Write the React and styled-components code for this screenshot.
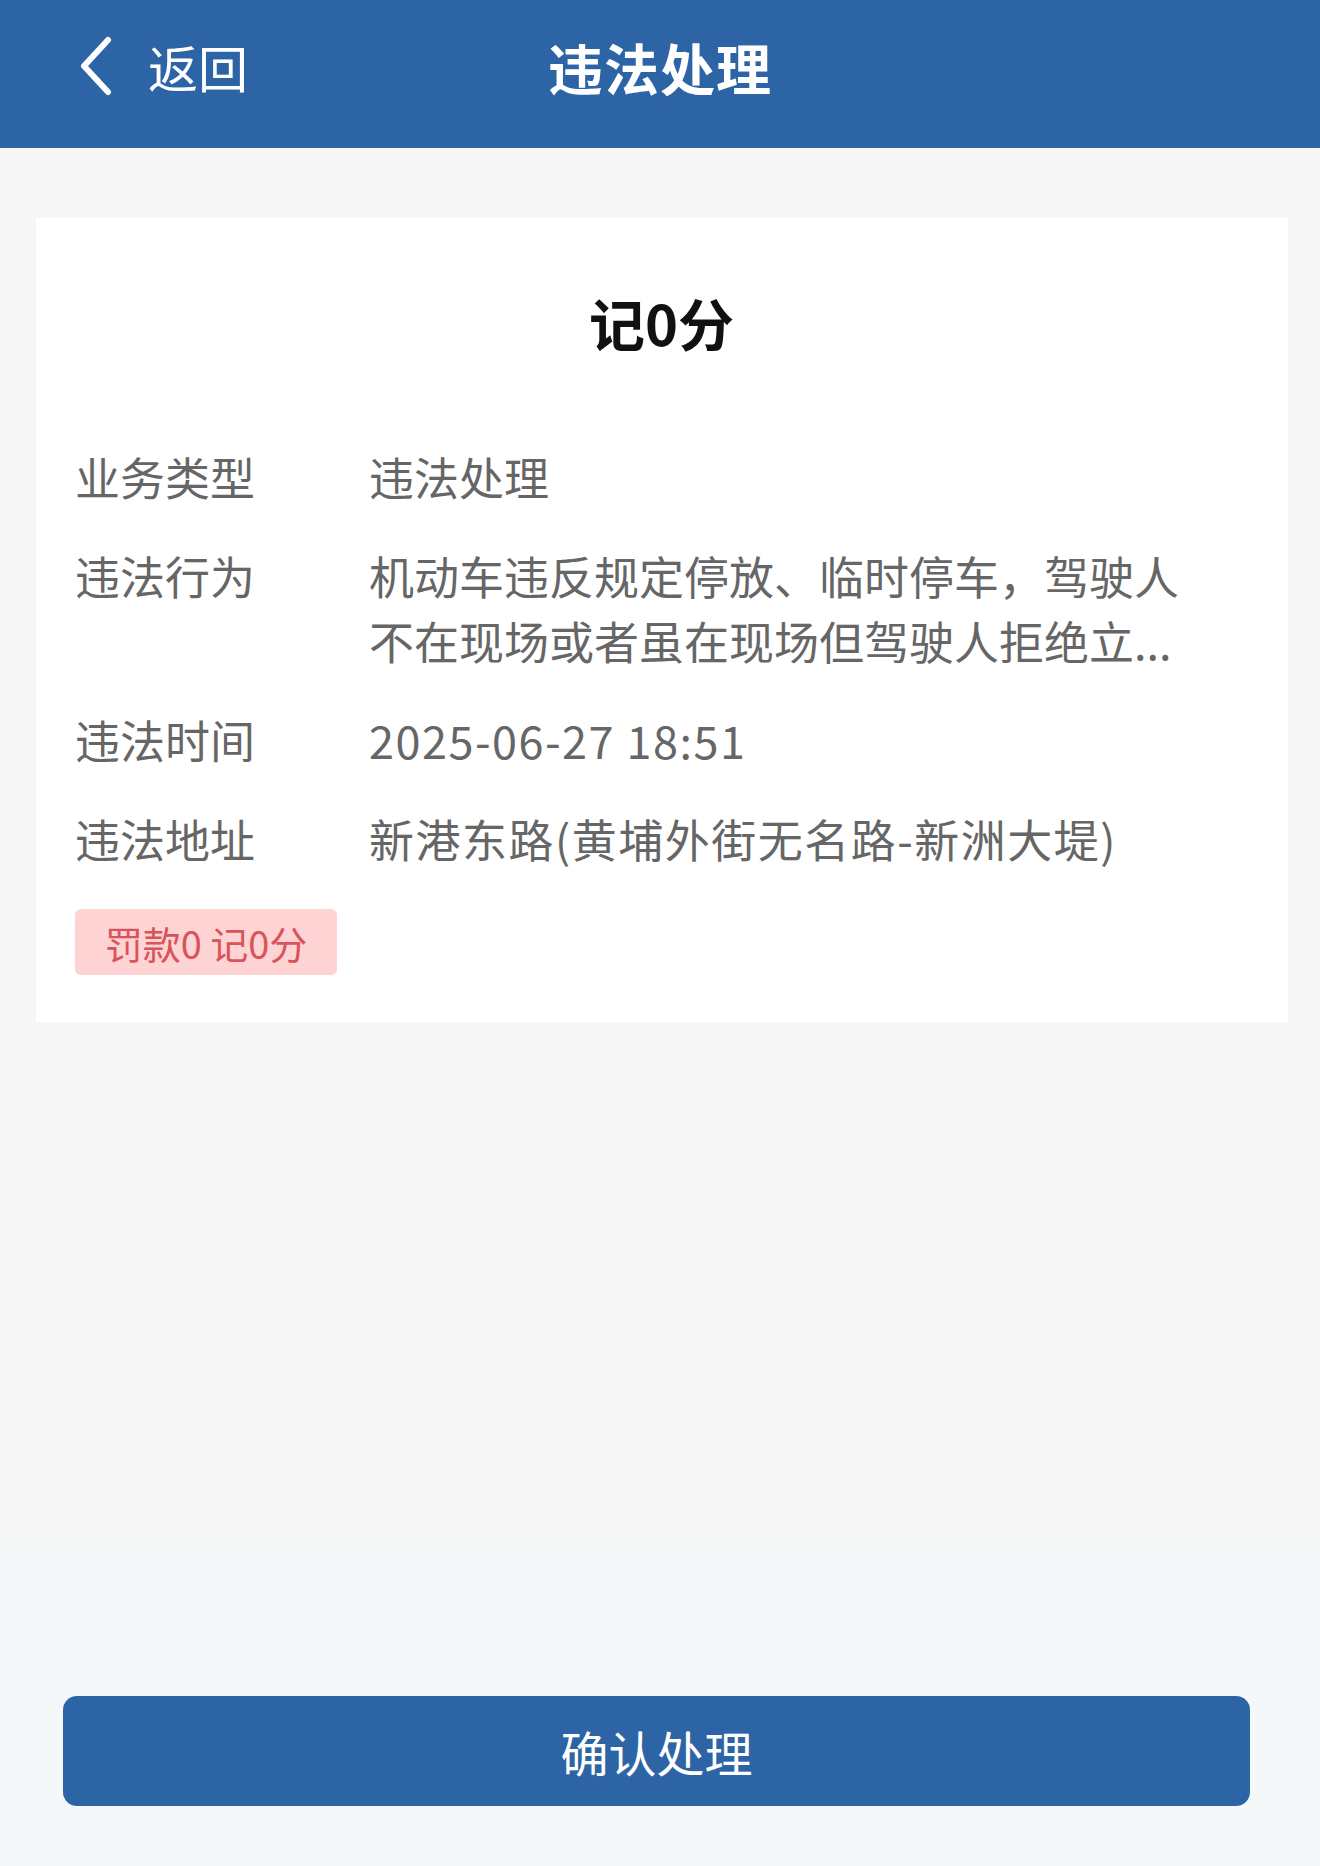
import React from 'react'
import styled, { createGlobalStyle } from 'styled-components'

const GlobalStyle = createGlobalStyle`
  html, body {
    margin: 0;
    padding: 0;
    background: #f6f6f6;
    font-family: "Noto Sans CJK SC", "Noto Sans", sans-serif;
  }
  * {
    box-sizing: border-box;
  }
`;

const Page = styled.div`
  min-height: 100vh;
  display: flex;
  flex-direction: column;
`;

const Header = styled.header`
  height: 148px;
  padding-bottom: 16px;
  background: #2d64a5;
  display: grid;
  grid-template-columns: 1fr auto 1fr;
  align-items: center;
  color: #fff;
`;

const Back = styled.div`
  display: flex;
  align-items: center;
  gap: 34px;
  padding-left: 78px;
  font-size: 50px;
  line-height: 1;
`;

const HeaderTitle = styled.h1`
  margin: 0;
  font-size: 55px;
  font-weight: 700;
  letter-spacing: 1px;
`;

const Main = styled.main`
  flex: 1;
  padding: 70px 32px 0 36px;
`;

const Card = styled.section`
  background: #fff;
  padding: 72px 40px 47px 39px;
`;

const CardTitle = styled.div`
  text-align: center;
  font-size: 56px;
  font-weight: 700;
  line-height: 64px;
  color: #111;
  margin-bottom: 90px;
`;

const InfoList = styled.div`
  display: flex;
  flex-direction: column;
  gap: 34px;
`;

const Row = styled.div`
  display: grid;
  grid-template-columns: 294px 1fr;
  font-size: 45px;
  line-height: 65px;
  color: #666;
`;

const Label = styled.div``;

const Value = styled.div`
  max-width: 830px;
  letter-spacing: ${({ $spaced }) => ($spaced ? '1.5px' : '0')};
`;

const Badge = styled.div`
  margin-top: 38px;
  width: 262px;
  height: 66px;
  border-radius: 6px;
  background: #fdd3d3;
  color: #d9545a;
  font-size: 38px;
  display: flex;
  align-items: center;
  justify-content: center;
  white-space: pre;
`;

const Footer = styled.footer`
  height: 324px;
  background: #f5f8f9;
  padding: 154px 70px 0 63px;
`;

const ConfirmButton = styled.button`
  width: 100%;
  height: 110px;
  border: none;
  border-radius: 14px;
  background: #2d64a5;
  color: #fff;
  font-family: inherit;
  font-size: 48px;
  cursor: pointer;
`;

const rows = [
  { label: '业务类型', value: '违法处理' },
  {
    label: '违法行为',
    value: '机动车违反规定停放、临时停车，驾驶人不在现场或者虽在现场但驾驶人拒绝立...',
  },
  { label: '违法时间', value: '2025-06-27 18:51', spaced: true },
  { label: '违法地址', value: '新港东路(黄埔外街无名路-新洲大堤)', spaced: true },
];

const App = () => {
  return (
    <Page>
      <GlobalStyle />
      <Header>
        <Back>
          <svg width="36" height="60" viewBox="0 0 36 60" fill="none">
            <path d="M30 4 L6 30 L30 56" stroke="#fff" strokeWidth="6" strokeLinecap="round" strokeLinejoin="round" />
          </svg>
          返回
        </Back>
        <HeaderTitle>违法处理</HeaderTitle>
        <div />
      </Header>

      <Main>
        <Card>
          <CardTitle>记0分</CardTitle>
          <InfoList>
            {rows.map((row) => (
              <Row key={row.label}>
                <Label>{row.label}</Label>
                <Value $spaced={row.spaced}>{row.value}</Value>
              </Row>
            ))}
          </InfoList>
          <Badge>罚款0 记0分</Badge>
        </Card>
      </Main>

      <Footer>
        <ConfirmButton>确认处理</ConfirmButton>
      </Footer>
    </Page>
  )
}

export default App
